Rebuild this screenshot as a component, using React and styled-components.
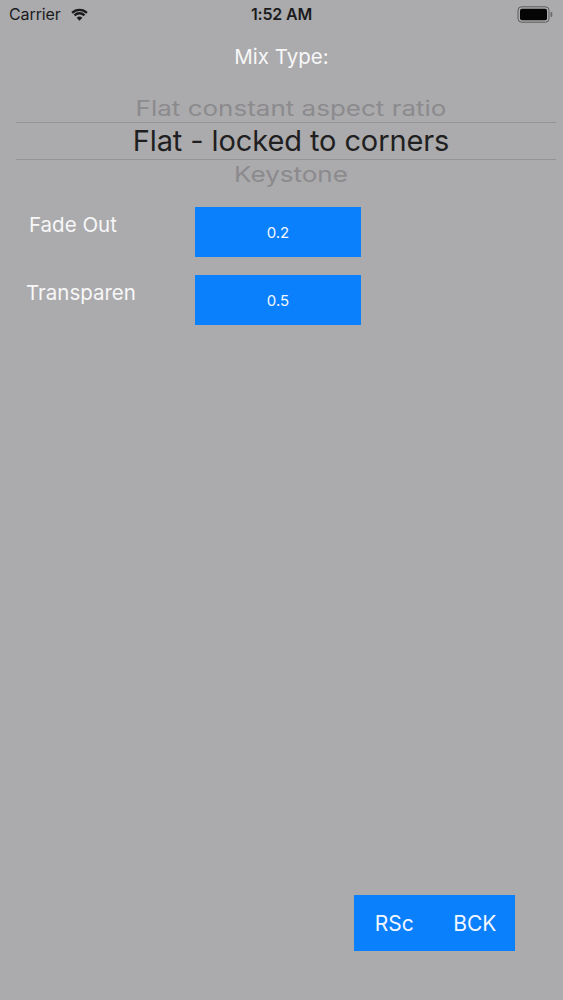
import React from "react";
import styled, { createGlobalStyle } from "styled-components";

const Global = createGlobalStyle`
  html, body { margin: 0; padding: 0; }
  body {
    background: #ababad;
    font-family: Inter, "Noto Sans", "Liberation Sans", sans-serif;
    -webkit-font-smoothing: antialiased;
  }
`;

const Page = styled.div`
  width: 563px;
  min-height: 100vh;
  background: #ababad;
  display: flex;
  flex-direction: column;
`;

const StatusBar = styled.div`
  height: 28px;
  padding: 0 9px;
  display: grid;
  grid-template-columns: 1fr auto 1fr;
  align-items: center;
  color: #1b1b1d;
`;

const Carrier = styled.div`
  display: flex;
  align-items: center;
  gap: 10px;
  font-size: 16px;
  line-height: 28px;
  letter-spacing: -0.1px;
`;

const Clock = styled.div`
  font-size: 16px;
  font-weight: 600;
  line-height: 28px;
  letter-spacing: -0.2px;
`;

const Battery = styled.div`
  display: flex;
  justify-content: flex-end;
  align-items: center;
`;

const Title = styled.div`
  margin-top: 17px;
  text-align: center;
  color: #f7f7f8;
  font-size: 20.5px;
  line-height: 24px;
`;

const Picker = styled.div`
  margin: 27px 7px 0 16px;
  display: flex;
  flex-direction: column;
`;

const Option = styled.div`
  height: ${(p) => p.$h}px;
  line-height: ${(p) => p.$h}px;
  padding-left: 10px;
  text-align: center;
  white-space: nowrap;
  font-size: ${(p) => (p.$selected ? 29 : 26)}px;
  color: ${(p) => (p.$selected ? "#1f1f21" : "#8b8a8d")};
  letter-spacing: ${(p) => (p.$selected ? "-0.1px" : "0")};
  transform: scaleY(${(p) => p.$squash});
`;

const Selected = styled.div`
  border-top: 1px solid #949396;
  border-bottom: 1px solid #949396;
`;

const Form = styled.div`
  margin-top: 20px;
  display: flex;
  flex-direction: column;
  gap: 18px;
`;

const Row = styled.div`
  display: grid;
  grid-template-columns: 195px 166px;
  align-items: start;
`;

const Label = styled.div`
  padding-left: ${(p) => p.$indent}px;
  margin-top: 6px;
  font-size: 20.5px;
  line-height: 24px;
  color: #f7f7f8;
  white-space: nowrap;
`;

const ValueBox = styled.div`
  height: 50px;
  background: #0a80fd;
  color: #f3f7ff;
  display: flex;
  align-items: center;
  justify-content: center;
  font-size: 15px;
`;

const Spacer = styled.div`
  flex: 1;
`;

const Footer = styled.div`
  display: flex;
  justify-content: flex-end;
  padding: 0 48px 49px 0;
`;

const ButtonGroup = styled.div`
  width: 161px;
  height: 56px;
  background: #0a80fd;
  display: grid;
  grid-template-columns: 1fr 1fr;
`;

const GroupButton = styled.button`
  border: 0;
  background: transparent;
  color: #f3f7ff;
  font-family: Inter, "Noto Sans", "Liberation Sans", sans-serif;
  font-size: 21px;
  padding: 0;
  cursor: pointer;
`;

function WifiIcon() {
  return (
    <svg width="17" height="13" viewBox="0 0 16 12" aria-hidden="true">
      <path d="M8 11.8 L5.3 9.1 A3.8 3.8 0 0 1 10.7 9.1 Z" fill="#1b1b1d" />
      <path
        d="M3.3 6.8 A6.6 6.6 0 0 1 12.7 6.8"
        fill="none"
        stroke="#1b1b1d"
        strokeWidth="2.2"
      />
      <path
        d="M1 4.5 A9.9 9.9 0 0 1 15 4.5"
        fill="none"
        stroke="#1b1b1d"
        strokeWidth="2.2"
      />
    </svg>
  );
}

function BatteryIcon() {
  return (
    <svg width="37" height="17" viewBox="0 0 37 17" aria-hidden="true">
      <rect x="1" y="0.8" width="31" height="15.4" rx="3.5" fill="none" stroke="#5a5a5c" strokeWidth="1" />
      <rect x="3" y="2.8" width="27" height="11.4" rx="2" fill="#050505" />
      <rect x="33.5" y="6" width="1.8" height="5" rx="0.9" fill="#6a6a6c" />
    </svg>
  );
}

export default function App() {
  return (
    <>
      <Global />
      <Page>
        <StatusBar>
          <Carrier>
            Carrier
            <WifiIcon />
          </Carrier>
          <Clock>1:52 AM</Clock>
          <Battery>
            <BatteryIcon />
          </Battery>
        </StatusBar>

        <Title>Mix Type:</Title>

        <Picker>
          <Option $h={26} $squash={0.8}>Flat constant aspect ratio</Option>
          <Selected>
            <Option $h={36} $squash={1} $selected>Flat - locked to corners</Option>
          </Selected>
          <Option $h={27} $squash={0.85}>Keystone</Option>
        </Picker>

        <Form>
          <Row>
            <Label $indent={29}>Fade Out</Label>
            <ValueBox>0.2</ValueBox>
          </Row>
          <Row>
            <Label $indent={26}>Transparen</Label>
            <ValueBox>0.5</ValueBox>
          </Row>
        </Form>

        <Spacer />

        <Footer>
          <ButtonGroup>
            <GroupButton>RSc</GroupButton>
            <GroupButton>BCK</GroupButton>
          </ButtonGroup>
        </Footer>
      </Page>
    </>
  );
}
